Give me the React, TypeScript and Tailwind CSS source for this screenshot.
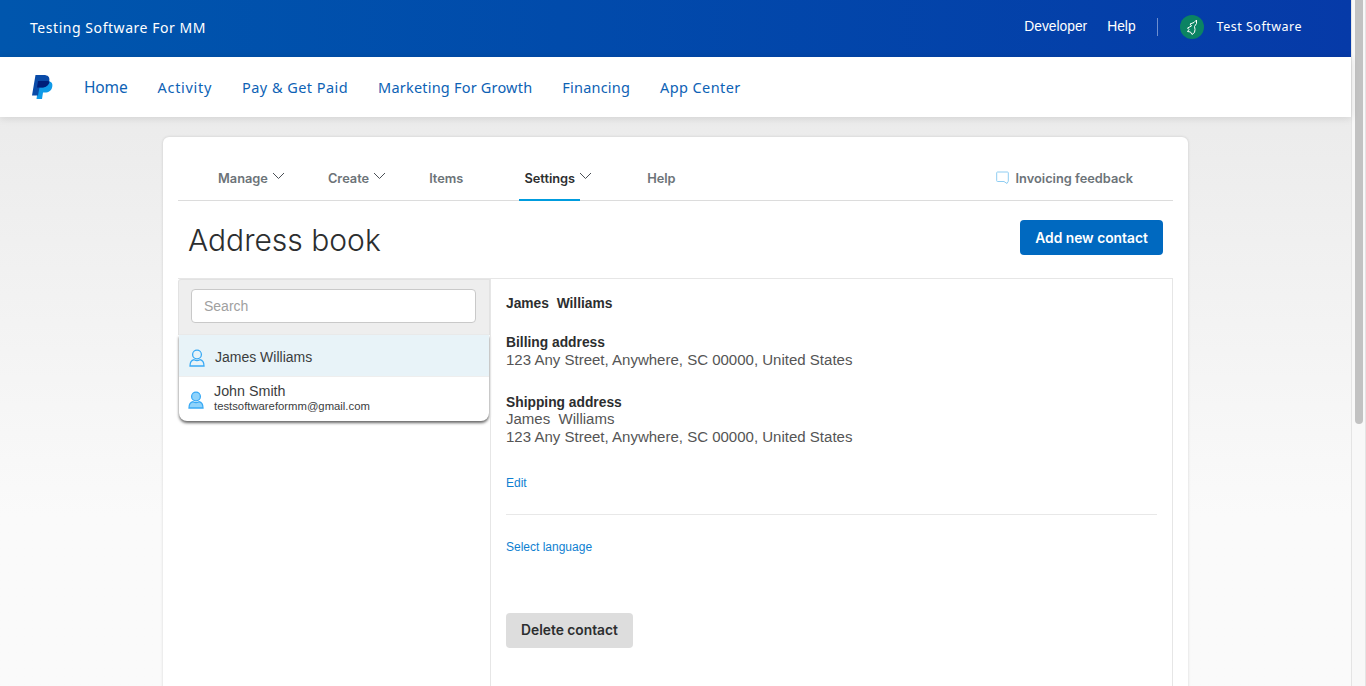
import React from 'react';

const PAYPAL_FONT = { fontFamily: '"Noto Sans", "Open Sans", sans-serif' };
const BOLD_FONT = { fontFamily: 'Inter, "Liberation Sans", sans-serif' };

function Chevron() {
  return (
    <svg width="13" height="8" viewBox="0 0 13 8" fill="none" className="absolute left-full top-[15px] ml-[4px]">
      <path d="M1 1l5.500 5.500L12 1" stroke="#4a4f55" strokeWidth="1" />
    </svg>
  );
}

function PayPalLogo() {
  return (
    <svg width="21" height="24" viewBox="0 0 21 24" className="ml-[1px]">
      <path d="M7 6h7.500c4 0 6.500 1.500 5.800 5.500-.7 4-3.500 6-7.500 6h-1.800l-1 6.500H4.500z" fill="#0f9ae8" />
      <path d="M3.500 0h8c4.500 0 6.500 2 5.800 6-.7 4.500-3.800 6.500-8 6.500H7.500L6 20.500H0z" fill="#0a4ba8" />
      <path d="M6 6h9.500c1.500.3 2 .8 2 1-.8 3.500-3.800 5.500-8 5.500H5z" fill="#001f7a" />
    </svg>
  );
}

function PersonIcon({ filled }: { filled?: boolean }) {
  return (
    <svg width="16" height="18" viewBox="0 0 16 18" fill={filled ? '#8fd3fb' : 'none'} stroke="#3aaaf5" strokeWidth="1.300">
      <circle cx="8" cy="5.500" r="4.400" />
      <path d="M1 17c0-3.600 1.800-5.800 4-6.300 1.800 1 4.200 1 6 0 2.200.5 4 2.700 4 6.300z" />
    </svg>
  );
}

function Tab({ label, caret, active, className }: { label: string; caret?: boolean; active?: boolean; className?: string }) {
  return (
    <div className={`relative flex h-[43px] items-center pt-[1px] ${className ?? ''}`}>
      <span className={`text-[12.800px] font-semibold ${active ? 'text-[#2c2e2f]' : 'text-[#6c7378]'}`}>{label}</span>
      {caret && <Chevron />}
      {active && <div className="absolute bottom-[-1px] left-[-5px] right-[-5px] h-[2px] bg-[#009cde]" />}
    </div>
  );
}

export default function App() {
  return (
    <div className="flex h-[686px] w-[1366px] overflow-hidden" style={{ fontFamily: '"Liberation Sans", Arial, sans-serif' }}>
      <div className="flex w-[1351px] flex-col bg-gradient-to-b from-[#ebebeb] from-[15%] to-[#fafafa] to-[75%]">
        {/* Top bar */}
        <header className="flex h-[57px] shrink-0 items-center justify-between bg-gradient-to-r from-[#0056ad] to-[#063aa8] pb-[3px] pl-[30px] pr-[49px] text-white" style={PAYPAL_FONT}>
          <span className="text-[14px] tracking-[0.55px]">Testing Software For MM</span>
          <div className="flex items-center">
            <span className="text-[13.800px]" style={{ fontFamily: '"Liberation Sans", sans-serif' }}>Developer</span>
            <span className="ml-[20px] text-[13.800px]" style={{ fontFamily: '"Liberation Sans", sans-serif' }}>Help</span>
            <div className="ml-[21px] h-[18px] w-px bg-[#6d8fd0]" />
            <div className="ml-[22px] flex h-6 w-6 items-center justify-center rounded-full bg-[#0b8363]">
              <svg width="12" height="17" viewBox="0 0 12 17" fill="none" stroke="#fff" strokeWidth="1">
                <path d="M10.500 1L8 3.500 4 5l1.500 2L1.500 9l1.500 1.500L1.500 12.500l3 .500L6 15.500l2.500-2 .5-3-.5-3 2-3z" />
              </svg>
            </div>
            <span className="ml-[13px] text-[12.500px] tracking-[0.5px]">Test Software</span>
          </div>
        </header>

        {/* Main nav */}
        <nav className="z-10 flex h-[60px] shrink-0 items-center bg-white pl-[31px] shadow-[0_1px_8px_rgba(0,0,0,0.12)]" style={PAYPAL_FONT}>
          <PayPalLogo />
          <div className="ml-[31px] flex items-center gap-[30px] pt-[1px] text-[14.500px] text-[#0d62b5]">
            <span className="text-[15.500px] tracking-[-0.15px]">Home</span>
            <span className="tracking-[0.7px]">Activity</span>
            <span className="tracking-[0.45px]">Pay &amp; Get Paid</span>
            <span className="tracking-[0.2px]">Marketing For Growth</span>
            <span className="tracking-[0.2px]">Financing</span>
            <span className="tracking-[0.4px]">App Center</span>
          </div>
        </nav>

        {/* Card */}
        <main className="ml-[163px] mt-5 w-[1025px] flex-1 rounded-t-[6px] bg-white px-[15px] shadow-[0_0_3px_rgba(0,0,0,0.15)]">
          <div className="flex h-[64px] items-end border-b border-[#dcdcdc] px-[40px]" style={BOLD_FONT}>
            <Tab label="Manage" caret />
            <Tab label="Create" caret className="ml-[60px]" />
            <Tab label="Items" className="ml-[60px]" />
            <Tab label="Settings" caret active className="ml-[61px]" />
            <Tab label="Help" className="ml-[72px]" />
            <div className="ml-auto flex h-[43px] items-center">
              <svg width="13" height="14" viewBox="0 0 13 14" fill="none" stroke="#8fcdf2" strokeWidth="1" className="mb-[2px] mr-[7px]">
                <path d="M1.500 1h10a.8.8 0 0 1 .8.8v8.400L11 12.500 8 10.500H1.500a.8.8 0 0 1-.8-.8V1.800a.8.8 0 0 1 .8-.8z" />
              </svg>
              <span className="text-[12.800px] font-semibold text-[#6c7378]">Invoicing feedback</span>
            </div>
          </div>

          <div className="flex h-[77px] items-start justify-between px-[10px]">
            <h1 className="mt-[21px] text-[30px] font-light leading-[36px] text-[#2c2e2f]" style={BOLD_FONT}>Address book</h1>
            <button className="mt-[19px] h-[35px] w-[143px] rounded-[4px] bg-[#0069c0] pt-[1px] text-[13.800px] font-semibold text-white" style={BOLD_FONT}>Add new contact</button>
          </div>

          <div className="flex h-[420px] border-t border-r border-[#e6e6e6]">
            {/* Contact list */}
            <div className="w-[312px] shrink-0">
              <div className="h-[56px] rounded-tl-[3px] border border-b-0 border-[#e2e2e2] bg-[#eeeeee] pl-3 pr-[13px] pt-[9px]">
                <div className="flex h-[34px] items-center rounded-[4px] border border-[#c9c9c9] bg-white pl-[12px] text-[14px] text-[#a0a0a0]">Search</div>
              </div>
              <div className="mx-[1px] overflow-hidden rounded-b-[8px] bg-white shadow-[0_2px_3px_rgba(0,0,0,0.6)]">
                <div className="flex h-[42px] items-center border-b border-[#eeeeee] bg-[#e8f3f8] pl-[10px] pt-[4px] text-[#3b3d3e]">
                  <PersonIcon />
                  <span className="ml-[10px] text-[14px]">James Williams</span>
                </div>
                <div className="flex h-[44px] items-center pl-[9px] text-[#3b3d3e]">
                  <div className="mt-[2px]">
                    <PersonIcon filled />
                  </div>
                  <div className="ml-[10px] mb-[2px] flex flex-col">
                    <span className="text-[14.300px] leading-[16px]">John Smith</span>
                    <span className="text-[11.300px] leading-[14px]">testsoftwareformm@gmail.com</span>
                  </div>
                </div>
              </div>
            </div>

            {/* Contact details */}
            <div className="flex-1 border-l border-[#e6e6e6] px-[15px]">
              <p className="mt-[16px] whitespace-pre text-[13.800px] font-bold leading-[17px] text-[#2c2e2f]">James  Williams</p>
              <p className="mt-[22px] text-[13.800px] font-bold leading-[17px] text-[#2c2e2f]">Billing address</p>
              <p className="text-[15.030px] leading-[18px] text-[#555555]">123 Any Street, Anywhere, SC 00000, United States</p>
              <p className="mt-[26px] text-[13.800px] font-bold leading-[15px] text-[#2c2e2f]">Shipping address</p>
              <p className="whitespace-pre text-[15.030px] leading-[18px] text-[#555555]">James  Williams</p>
              <p className="text-[15.030px] leading-[18px] text-[#555555]">123 Any Street, Anywhere, SC 00000, United States</p>
              <p className="mt-[30px] text-[12px] leading-[14px] text-[#0f7fd1]">Edit</p>
              <div className="mt-[24px] h-px bg-[#e8e8e8]" />
              <p className="mt-[24px] text-[12px] leading-[16px] text-[#0f7fd1]">Select language</p>
              <button className="mt-[58px] h-[35px] w-[127px] rounded-[4px] bg-[#dddddd] text-[13.800px] font-semibold text-[#2c2e2f]" style={BOLD_FONT}>Delete contact</button>
            </div>
          </div>
        </main>
      </div>

      {/* Scrollbar */}
      <div className="w-[15px] shrink-0 border-x border-[#e4e4e4] bg-[#f8f8f8] pl-[3px]">
        <div className="h-[424px] w-[8px] rounded-b-full bg-[#c2c2c2]" />
      </div>
    </div>
  );
}
